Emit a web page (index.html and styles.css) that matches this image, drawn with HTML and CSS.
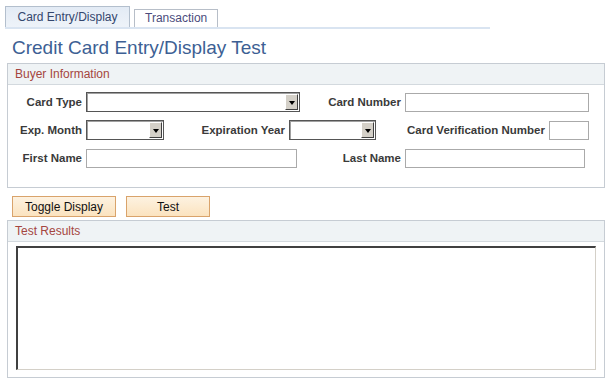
FILE: index.html
```html
<!DOCTYPE html>
<html lang="en">
  <head>
    <title>Credit Card Entry/Display Test</title>
    <meta name="viewport" content="width=device-width, initial-scale=1">
    <link rel="stylesheet" href="styles.css">
  </head>
  <body>
    <div class="page">
      <div class="tabs">
        <span class="tab active">Card Entry/Display</span>
        <span class="tab">Transaction</span>
      </div>
      <h1 class="title">Credit Card Entry/Display Test</h1>

      <div class="group buyer">
        <div class="group-head">Buyer Information</div>
        <div class="form">
          <div class="row">
            <label class="lbl lbl-first">Card Type</label>
            <span class="dropdown dd-cardtype"><select></select></span>
            <label class="lbl lbl-cardnum">Card Number</label>
            <input type="text" class="field in-cardnum">
          </div>
          <div class="row">
            <label class="lbl lbl-first">Exp. Month</label>
            <span class="dropdown dd-month"><select></select></span>
            <label class="lbl lbl-year">Expiration Year</label>
            <span class="dropdown dd-year"><select></select></span>
            <label class="lbl lbl-cvn">Card Verification Number</label>
            <input type="text" class="field in-cvn">
          </div>
          <div class="row">
            <label class="lbl lbl-first">First Name</label>
            <input type="text" class="field in-first">
            <label class="lbl lbl-last">Last Name</label>
            <input type="text" class="field in-last">
          </div>
        </div>
      </div>

      <div class="actions">
        <button class="btn btn-toggle">Toggle Display</button>
        <button class="btn btn-test">Test</button>
      </div>

      <div class="group results">
        <div class="group-head">Test Results</div>
        <div class="results-body">
          <textarea class="output"></textarea>
        </div>
      </div>
    </div>
  </body>
</html>
```

FILE: styles.css
```css
body {
  margin: 0;
  padding: 0;
  background-color: #fff;
  font-family: "Liberation Sans", Arial, sans-serif;
  font-size: 12px;
  color: #333;
}
.page {
  width: 612px;
}

/* tabs */
.tabs {
  display: flex;
  align-items: flex-end;
  margin-left: 5px;
  width: 485px;
  height: 21px;
  padding-top: 6px;
  border-bottom: 2px solid #d9e4f1;
}
.tab {
  box-sizing: border-box;
  height: 18px;
  padding: 0 10px;
  margin-left: 4px;
  border: 1px solid #b7bec8;
  border-bottom: none;
  background: #fff;
  color: #4b4b7c;
  line-height: 17px;
}
.tab.active {
  height: 21px;
  margin-left: 0;
  width: 125px;
  text-align: center;
  padding: 0;
  line-height: 20px;
  border-color: #b3bfcd;
  background: linear-gradient(#e3ebf5, #eef3f9);
  color: #33466d;
}

.title {
  margin: 8px 0 4px 12px;
  font-size: 19px;
  font-weight: normal;
  line-height: 22px;
  color: #3d5f94;
}

/* group boxes */
.group {
  box-sizing: border-box;
  margin-left: 7px;
  width: 598px;
  border: 1px solid #c6ccd3;
}
.group-head {
  height: 20px;
  line-height: 20px;
  padding-left: 7px;
  background-color: #eff3f5;
  border-bottom: 1px solid #d3d9de;
  color: #a5463f;
}

.form {
  padding: 7px 0 19px 0;
}
.row {
  display: flex;
  align-items: center;
  height: 20px;
  margin-bottom: 8px;
}
.row:last-child {
  margin-bottom: 0;
}
.lbl {
  text-align: right;
  font-weight: bold;
  font-size: 11.5px;
  color: #3a3a3a;
  margin-right: 4px;
  white-space: nowrap;
}
.lbl-first { width: 74px; }
.lbl-cardnum { width: 101px; }
.lbl-year { width: 121px; }
.lbl-cvn { width: 169px; }
.lbl-last { width: 104px; }

.field {
  box-sizing: border-box;
  height: 19px;
  margin: 0;
  padding: 0 2px;
  border: 1px solid #aaa;
  background: #fff;
}
.in-cardnum { width: 184px; }
.in-cvn { width: 40px; }
.in-first { width: 211px; }
.in-last { width: 180px; }

/* classic dropdown */
.dropdown {
  position: relative;
  display: inline-block;
  box-sizing: border-box;
  height: 20px;
  border: 1px solid #555;
  box-shadow: inset 1px 1px 0 #a0a0a0;
  background: #fff;
}
.dropdown select {
  -webkit-appearance: none;
  appearance: none;
  width: 100%;
  height: 100%;
  border: none;
  background: transparent;
}
.dropdown::after {
  content: "";
  position: absolute;
  top: 1px;
  right: 1px;
  width: 13px;
  height: 16px;
  box-sizing: border-box;
  border: 1px solid;
  border-color: #fff #404040 #404040 #fff;
  background: #d4d0c8;
}
.dropdown::before {
  content: "";
  position: absolute;
  z-index: 1;
  top: 8px;
  right: 4px;
  border-left: 3.5px solid transparent;
  border-right: 3.5px solid transparent;
  border-top: 4px solid #000;
}
.dd-cardtype { width: 214px; }
.dd-month { width: 78px; }
.dd-year { width: 87px; }

/* buttons */
.actions {
  display: flex;
  gap: 10px;
  margin: 8px 0 3px 12px;
}
.btn {
  box-sizing: border-box;
  height: 21px;
  padding: 0;
  border: 1px solid #d9a36b;
  background: linear-gradient(#fdf2e1, #fbe3bf);
  font-family: "Liberation Sans", Arial, sans-serif;
  font-size: 12px;
  color: #111;
  cursor: pointer;
}
.btn-toggle { width: 104px; }
.btn-test { width: 84px; }

/* results */
.results-body {
  padding: 4px 8px 7px 8px;
}
.output {
  display: block;
  box-sizing: border-box;
  width: 580px;
  height: 124px;
  margin: 0;
  resize: none;
  border-style: solid;
  border-width: 2px 1px 1px 2px;
  border-color: #404040 #d4d0c8 #d4d0c8 #404040;
  background: #fff;
}
```
